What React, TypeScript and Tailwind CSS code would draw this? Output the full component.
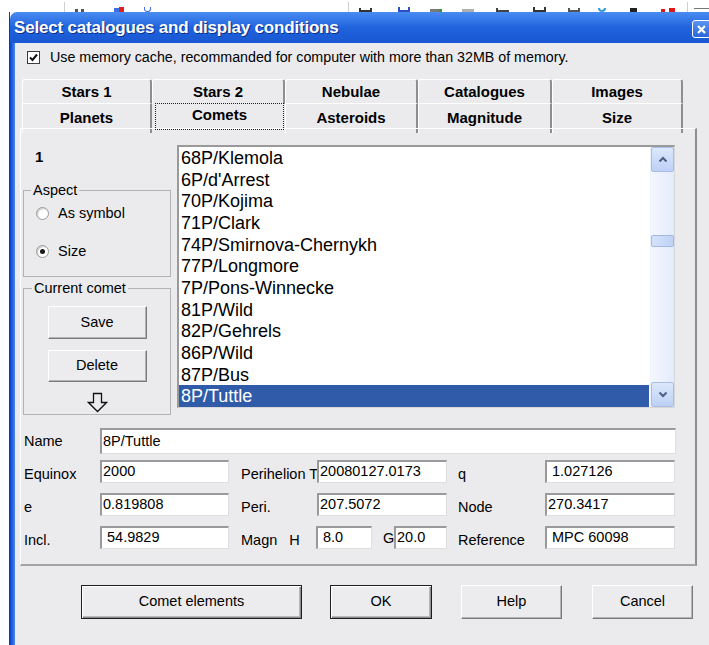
import React from 'react';

const comets = [
  '68P/Klemola',
  "6P/d'Arrest",
  '70P/Kojima',
  '71P/Clark',
  '74P/Smirnova-Chernykh',
  '77P/Longmore',
  '7P/Pons-Winnecke',
  '81P/Wild',
  '82P/Gehrels',
  '86P/Wild',
  '87P/Bus',
  '8P/Tuttle',
];

const tabsTop = ['Stars 1', 'Stars 2', 'Nebulae', 'Catalogues', 'Images'];
const tabsBottom = ['Planets', 'Comets', 'Asteroids', 'Magnitude', 'Size'];

function Edit({ value, className = '' }: { value: string; className?: string }) {
  return (
    <div
      className={`h-[23px] bg-white border-t-2 border-l-2 border-r border-b border-t-[#9a9a9a] border-l-[#9a9a9a] border-r-[#dedede] border-b-[#dedede] pl-[1px] text-[14.5px] leading-[19px] whitespace-pre overflow-hidden shrink-0 ${className}`}
    >
      {value}
    </div>
  );
}

// labels of the element rows sit a little below the middle of their edit box
function Label({ text, className = '' }: { text: string; className?: string }) {
  return <div className={`text-[14.5px] leading-[17px] whitespace-nowrap shrink-0 ${className}`}>{text}</div>;
}

function Button({ text, primary, className = '' }: { text: string; primary?: boolean; className?: string }) {
  const edge = primary
    ? 'border border-[#1e1e1e] shadow-[inset_1px_1px_0_#ffffff,inset_-1px_-1px_0_#8c8c8c,inset_-2px_-2px_0_#b8b8b8]'
    : 'border border-t-white border-l-white border-r-[#7a7a7a] border-b-[#7a7a7a] shadow-[inset_-1px_-1px_0_#b4b4b4]';
  return (
    <div className={`flex items-center justify-center bg-[#ececee] text-[14.5px] ${edge} ${className}`}>{text}</div>
  );
}

function Radio({ checked, label, className = '' }: { checked?: boolean; label: string; className?: string }) {
  return (
    <div className={`flex items-center h-[17px] pl-[12px] ${className}`}>
      <div className="w-[13px] h-[13px] rounded-full bg-white border border-[#9a9a9a] shadow-[inset_1px_1px_1px_#c9c9c9] flex items-center justify-center">
        {checked && <div className="w-[5px] h-[5px] rounded-full bg-[#1a1a1a]" />}
      </div>
      <span className="ml-[9px] text-[14.5px]">{label}</span>
    </div>
  );
}

function Chevron({ up }: { up?: boolean }) {
  return (
    <svg width="10" height="7" viewBox="0 0 10 7">
      <polyline
        points={up ? '1.5,5.5 5,2 8.5,5.5' : '1.5,1.5 5,5 8.5,1.5'}
        fill="none"
        stroke="#4b5f83"
        strokeWidth="2"
      />
    </svg>
  );
}

function ScrollButton({ up }: { up?: boolean }) {
  return (
    <div className="h-[25px] rounded-[2px] border border-[#a9bde6] bg-gradient-to-b from-[#dce8fc] to-[#bdd1f6] flex items-center justify-center">
      <Chevron up={up} />
    </div>
  );
}

export default function App() {
  return (
    <div className="w-[709px] h-[645px] overflow-hidden bg-white font-['Liberation_Sans',Arial,sans-serif] text-black flex flex-col">
      {/* main window toolbar peeking above the dialog */}
      <div className="h-[12px] shrink-0 flex items-end">
        <div className="ml-[64px] w-[1px] h-[10px] bg-[#cfcfcf]" />
        <div className="ml-[10px] w-[3px] h-[3px] bg-[#555]" />
        <div className="ml-[3px] w-[3px] h-[3px] bg-[#555]" />
        <div className="ml-[30px] w-[6px] h-[4px] bg-[#3b6ee0]" />
        <div className="w-[5px] h-[5px] bg-[#e02020]" />
        <div className="ml-[20px] w-[7px] h-[5px] rounded-b-full border border-t-0 border-[#3a6bd8]" />
        <div className="ml-[197px] w-[1px] h-[10px] bg-[#cfcfcf]" />
        <div className="ml-[10px] w-[14px] h-[4px] border-2 border-t-0 border-[#333]" />
        <div className="ml-[26px] w-[12px] h-[5px] border-2 border-t-0 border-[#2c4fc7]" />
        <div className="ml-[20px] w-[10px] h-[3px] bg-[#7a7a7a]" />
        <div className="w-[3px] h-[3px] bg-[#2aa02a]" />
        <div className="ml-[20px] w-[12px] h-[3px] bg-[#b0b0b0]" />
        <div className="ml-[22px] w-[14px] h-[4px] border-b-2 border-l-2 border-[#444]" />
        <div className="ml-[24px] w-[14px] h-[5px] border-2 border-t-0 border-[#333]" />
        <div className="ml-[22px] w-[12px] h-[4px] border-2 border-t-0 border-[#555]" />
        <div className="ml-[18px] w-[8px] h-[4px] rounded-b-full border-2 border-t-0 border-[#3a9ad8]" />
        <div className="ml-[24px] w-[8px] h-[4px] bg-[#222]" />
        <div className="ml-[24px] w-[4px] h-[3px] bg-[#e01818]" />
        <div className="ml-[4px] w-[6px] h-[4px] bg-[#e01818]" />
        <div className="ml-[12px] w-[1px] h-[10px] bg-[#cfcfcf]" />
        <div className="ml-[6px] w-[16px] h-[4px] border-t border-[#777]" />
      </div>

      <div className="flex flex-1 min-h-0">
        <div className="w-[9px] shrink-0" />
        <div className="w-[1px] shrink-0 bg-[#3a3a3a]" />

        <div className="flex-1 flex flex-col">
          {/* title bar */}
          <div className="h-[31px] shrink-0 rounded-tl-[7px] bg-gradient-to-b from-[#4a8cf2] via-[#2063dc] to-[#1958d2] flex items-center pl-[4px]">
            <span className="text-white text-[17px] font-bold tracking-[-0.2px] [text-shadow:1px_1px_0_#0c2f8a]">
              Select catalogues and display conditions
            </span>
            <div className="ml-auto -mr-[2px] mt-[3px] w-[19px] h-[18px] rounded-[3px] border border-white bg-gradient-to-b from-[#5a95f2] to-[#2a66dc] flex items-center justify-center">
              <svg width="9" height="9" viewBox="0 0 9 9">
                <path d="M1 1 L8 8 M8 1 L1 8" stroke="white" strokeWidth="2.2" />
              </svg>
            </div>
          </div>

          <div className="flex flex-1 min-h-0">
            <div className="w-[5px] shrink-0 bg-gradient-to-r from-[#0b3fcc] to-[#4a86ee]" />

            <div className="flex-1 bg-[#ebebee] flex flex-col">
              {/* memory cache option */}
              <div className="flex items-center h-[13px] mt-[8px] ml-[12px]">
                <div className="w-[13px] h-[13px] bg-white border border-[#3c3c3c] flex items-center justify-center">
                  <svg width="9" height="9" viewBox="0 0 9 9">
                    <polyline points="1,4.5 3.5,7 8,1.5" fill="none" stroke="#111" strokeWidth="2" />
                  </svg>
                </div>
                <span className="ml-[10px] text-[14.25px] whitespace-nowrap">
                  Use memory cache, recommanded for computer with more than 32MB of memory.
                </span>
              </div>

              {/* tab rows */}
              <div className="ml-[7px] mt-[15px] w-[661px]">
                <div className="grid grid-cols-[130px_133px_133px_134px_131px] h-[24px]">
                  {tabsTop.map((t) => (
                    <div
                      key={t}
                      className="flex items-center justify-center pt-[1px] border-t border-l border-r-2 border-t-white border-l-white border-r-[#8e8e8e] rounded-t-[3px] text-[15px] font-bold"
                    >
                      {t}
                    </div>
                  ))}
                </div>
                <div className="grid grid-cols-[130px_133px_133px_134px_131px] h-[25px]">
                  {tabsBottom.map((t) =>
                    t === 'Comets' ? (
                      <div key={t} className="pl-[3px] pr-[1px] pb-[3px]">
                        <div className="h-full border border-dotted border-[#222] flex items-center justify-center pb-[2px] text-[15px] font-bold">
                          {t}
                        </div>
                      </div>
                    ) : (
                      <div
                        key={t}
                        className="flex items-center justify-center border-t border-l border-r-2 border-t-white border-l-white border-r-[#8e8e8e] text-[15px] font-bold"
                      >
                        {t}
                      </div>
                    )
                  )}
                </div>
              </div>

              {/* tab page */}
              <div className="ml-[5px] w-[677px] h-[438px] border-t border-l border-r-2 border-b-2 border-t-white border-l-white border-r-[#8e8e8e] border-b-[#a4a4a4] flex flex-col">
                <div className="flex pt-[16px] pl-[2px]">
                  {/* left column */}
                  <div className="w-[148px] flex flex-col">
                    <div className="mt-[3px] h-[17px] pl-[12px] text-[15px] leading-[17px] font-bold">1</div>

                    <fieldset className="mt-[17px] border border-[#b3b3b3] pb-[16px]">
                      <legend className="ml-[7px] px-[2px] text-[14.5px] leading-[17px]">Aspect</legend>
                      <Radio label="As symbol" className="mt-[6px]" />
                      <Radio label="Size" checked className="mt-[21px]" />
                    </fieldset>

                    <fieldset className="mt-[3px] border border-[#b3b3b3] flex flex-col items-center">
                      <legend className="ml-[8px] px-[2px] text-[14.5px] leading-[17px]">Current comet</legend>
                      <Button text="Save" className="mt-[9px] w-[99px] h-[33px]" />
                      <Button text="Delete" className="mt-[11px] w-[99px] h-[32px]" />
                      <svg className="mt-[10px] mb-[1px]" width="21" height="21" viewBox="0 0 21 21">
                        <path d="M6.5 1.5 H14.5 V10.5 H19.5 L10.5 19.5 L1.5 10.5 H6.5 Z" fill="none" stroke="#111" strokeWidth="1.3" />
                      </svg>
                    </fieldset>
                  </div>

                  {/* comet list */}
                  <div className="ml-[6px] w-[498px] h-[263px] bg-white border-t-2 border-l-2 border-r border-b border-t-[#9a9a9a] border-l-[#9a9a9a] border-r-[#d8d8d8] border-b-[#d8d8d8] flex">
                    <div className="flex-1 flex flex-col">
                      {comets.map((c) => (
                        <div
                          key={c}
                          className={`h-[21.67px] leading-[22.5px] pl-[2px] text-[18px] ${
                            c === '8P/Tuttle' ? 'bg-[#2f5ba8] text-white' : ''
                          }`}
                        >
                          {c}
                        </div>
                      ))}
                    </div>
                    <div className="w-[24px] ml-[1px] flex flex-col bg-gradient-to-r from-[#f4f7fe] to-[#e3ebfb] border-l border-[#eef2fb]">
                      <ScrollButton up />
                      <div className="mt-[63px] h-[12px] rounded-[2px] border border-[#a2b7e2] bg-gradient-to-r from-[#d4e2fb] to-[#c0d3f6]" />
                      <div className="flex-1" />
                      <ScrollButton />
                    </div>
                  </div>
                </div>

                {/* comet elements */}
                <div className="pl-[3px] mt-[13px] flex flex-col">
                  <div className="flex items-center h-[26px]">
                    <Label text="Name" className="w-[76px]" />
                    <Edit value="8P/Tuttle" className="w-[576px] h-[26px] leading-[22px]" />
                  </div>
                  <div className="flex items-center h-[23px] mt-[6px]">
                    <Label text="Equinox" className="w-[76px] mt-[6px]" />
                    <Edit value="2000" className="w-[129px]" />
                    <Label text="Perihelion T" className="ml-[12px] w-[76px] mt-[6px]" />
                    <Edit value="20080127.0173" className="w-[130px]" />
                    <Label text="q" className="ml-[11px] w-[87px] mt-[6px]" />
                    <Edit value=" 1.027126" className="w-[130px]" />
                  </div>
                  <div className="flex items-center h-[23px] mt-[10px]">
                    <Label text="e" className="w-[76px] mt-[6px]" />
                    <Edit value="0.819808" className="w-[129px]" />
                    <Label text="Peri." className="ml-[12px] w-[76px] mt-[6px]" />
                    <Edit value="207.5072" className="w-[130px]" />
                    <Label text="Node" className="ml-[11px] w-[87px] mt-[6px]" />
                    <Edit value="270.3417" className="w-[130px]" />
                  </div>
                  <div className="flex items-center h-[23px] mt-[10px]">
                    <Label text="Incl." className="w-[76px] mt-[6px]" />
                    <Edit value=" 54.9829" className="w-[129px]" />
                    <div className="ml-[12px] w-[75px] flex shrink-0 mt-[6px]">
                      <Label text="Magn" />
                      <Label text="H" className="ml-[12px]" />
                    </div>
                    <Edit value=" 8.0" className="w-[56px]" />
                    <Label text="G" className="ml-[11px] w-[11px] mt-[2px]" />
                    <Edit value="20.0" className="w-[53px]" />
                    <Label text="Reference" className="ml-[11px] w-[87px] mt-[6px]" />
                    <Edit value=" MPC 60098" className="w-[130px]" />
                  </div>
                </div>
              </div>

              {/* dialog buttons */}
              <div className="flex mt-[19px] ml-[66px]">
                <Button text="Comet elements" primary className="w-[221px] h-[34px]" />
                <Button text="OK" primary className="ml-[28px] w-[102px] h-[34px]" />
                <Button text="Help" className="ml-[29px] w-[101px] h-[34px]" />
                <Button text="Cancel" className="ml-[30px] w-[101px] h-[34px]" />
              </div>
            </div>
          </div>
        </div>
      </div>
    </div>
  );
}
